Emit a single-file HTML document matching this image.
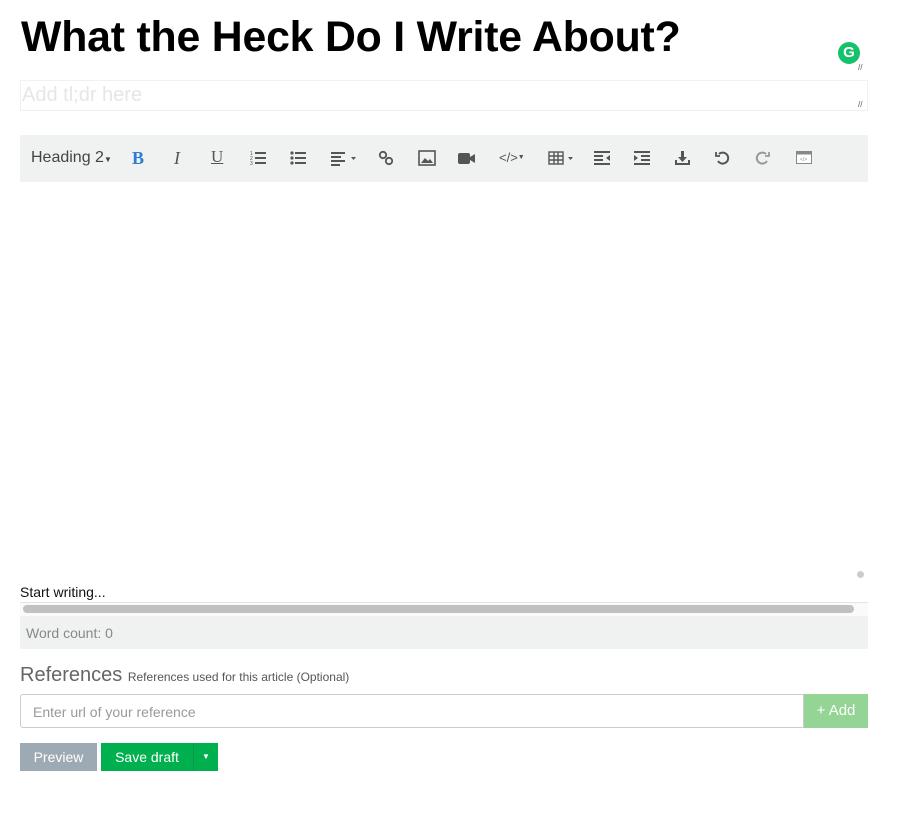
<!DOCTYPE html>
<html><head><meta charset="utf-8"><style>
*{box-sizing:border-box;margin:0;padding:0}
body{width:906px;height:822px;background:#fff;font-family:"Liberation Sans",sans-serif;position:relative;overflow:hidden}
.a{position:absolute}
h1{position:absolute;left:21px;top:13px;font-size:42.8px;font-weight:bold;color:#000;letter-spacing:-0.2px;white-space:nowrap}
.tb{left:20px;top:135px;width:848px;height:47px;background:#f0f1f1;border-radius:2px}
.ic{position:absolute;top:149px}
svg{display:block}
</style></head><body>
<h1>What the Heck Do I Write About?</h1>
<div class="a" style="left:838px;top:42px;width:22px;height:22px;border-radius:50%;background:#15c26b;color:#fff;font-weight:bold;font-size:15px;text-align:center;line-height:22px">G</div>
<div class="a" style="left:858px;top:63px;font-size:8px;color:#555">//</div>
<div class="a" style="left:20px;top:80px;width:848px;height:31px;border:1px solid #edf2f2;font-size:20px;color:#e6e6e6;padding:3px 0 0 1px">Add tl;dr here</div>
<div class="a" style="left:858px;top:100px;font-size:8px;color:#555">//</div>
<div class="a tb"></div>
<div class="a" style="left:31px;top:149px;font-size:16px;color:#444">Heading 2<span style="font-size:8px">▼</span></div>
<div class="a" style="left:132px;top:148px;font-size:18px;font-weight:bold;color:#2a7fd4;font-family:'Liberation Serif',serif">B</div>
<div class="a" style="left:174px;top:148px;font-size:18px;font-style:italic;color:#555;font-family:'Liberation Serif',serif">I</div>
<div class="a" style="left:211px;top:147px;font-size:17px;text-decoration:underline;color:#555;font-family:'Liberation Serif',serif">U</div>
<svg class="ic" style="left:250px" width="17" height="18" viewBox="0 0 17 18" fill="#555"><rect x="5" y="3" width="11" height="2"/><rect x="5" y="8" width="11" height="2"/><rect x="5" y="13" width="11" height="2"/><text x="0" y="6" font-size="5">1</text><text x="0" y="11" font-size="5">2</text><text x="0" y="16" font-size="5">3</text></svg>
<svg class="ic" style="left:290px" width="17" height="18" viewBox="0 0 17 18" fill="#555"><circle cx="2" cy="4" r="1.6"/><circle cx="2" cy="9" r="1.6"/><circle cx="2" cy="14" r="1.6"/><rect x="5" y="3" width="11" height="2"/><rect x="5" y="8" width="11" height="2"/><rect x="5" y="13" width="11" height="2"/></svg>
<svg class="ic" style="left:331px" width="28" height="18" viewBox="0 0 28 18" fill="#555"><rect x="0" y="3" width="14" height="2"/><rect x="0" y="7" width="10" height="2"/><rect x="0" y="11" width="14" height="2"/><rect x="0" y="15" width="9" height="2"/><path d="M20 8h5l-2.5 3z"/></svg>
<svg class="ic" style="left:378px" width="16" height="18" viewBox="0 0 16 18" fill="none" stroke="#555" stroke-width="1.8"><circle cx="5" cy="6" r="3.2"/><circle cx="11" cy="12" r="3.2"/></svg>
<svg class="ic" style="left:418px" width="18" height="18" viewBox="0 0 18 18"><rect x="1" y="2" width="16" height="14" fill="none" stroke="#555" stroke-width="1.6"/><path d="M3 14l4-5 3 3 2-2 3 4z" fill="#555"/></svg>
<svg class="ic" style="left:457px" width="19" height="18" viewBox="0 0 19 18" fill="#555"><rect x="1" y="4" width="12" height="11" rx="2"/><path d="M13 8l5-3v9l-5-3z"/></svg>
<div class="a" style="left:499px;top:150px;font-size:13px;color:#555">&lt;/&gt;<span style="font-size:7px;vertical-align:3px">▼</span></div>
<svg class="ic" style="left:548px" width="28" height="18" viewBox="0 0 28 18" fill="none" stroke="#555" stroke-width="1.4"><rect x="1" y="3" width="14" height="12"/><path d="M1 7h14M1 11h14M6 3v12M10 3v12"/><path d="M20 8h5l-2.5 3z" fill="#555" stroke="none"/></svg>
<svg class="ic" style="left:594px" width="17" height="18" viewBox="0 0 17 18" fill="#555"><rect x="0" y="2" width="16" height="2"/><rect x="0" y="6" width="9" height="2"/><rect x="0" y="10" width="9" height="2"/><rect x="0" y="14" width="16" height="2"/><path d="M16 6v6l-4-3z"/></svg>
<svg class="ic" style="left:634px" width="17" height="18" viewBox="0 0 17 18" fill="#555"><rect x="0" y="2" width="16" height="2"/><rect x="7" y="6" width="9" height="2"/><rect x="7" y="10" width="9" height="2"/><rect x="0" y="14" width="16" height="2"/><path d="M0 6v6l4-3z"/></svg>
<svg class="ic" style="left:674px" width="17" height="18" viewBox="0 0 17 18" fill="#555"><path d="M7 2h3v6h3l-4.5 5L4 8h3z"/><path d="M1 11h2v3h11v-3h2v5H1z"/></svg>
<svg class="ic" style="left:714px" width="17" height="18" viewBox="0 0 17 18" fill="none" stroke="#555" stroke-width="2"><path d="M5 5a5.5 5.5 0 1 1 -1 7"/><path d="M2 3v4h4" stroke-width="1.8"/></svg>
<svg class="ic" style="left:754px" width="17" height="18" viewBox="0 0 17 18" fill="none" stroke="#999" stroke-width="2"><path d="M12 5a5.5 5.5 0 1 0 1 7"/><path d="M15 3v4h-4" stroke-width="1.8"/></svg>
<svg class="ic" style="left:796px" width="17" height="18" viewBox="0 0 17 18"><rect x="0.5" y="2.5" width="15" height="12" fill="#fff" stroke="#888"/><rect x="0.5" y="2.5" width="15" height="3" fill="#888"/><text x="4" y="12" font-size="5" fill="#888">&lt;/&gt;</text></svg>
<div class="a" style="left:857px;top:571px;width:7px;height:7px;border-radius:50%;background:#ccc"></div>
<div class="a" style="left:20px;top:584px;font-size:14px;color:#111">Start writing...</div>
<div class="a" style="left:20px;top:602px;width:848px;height:14px;border-top:1px solid #e4e4e4;background:#fafafa"></div>
<div class="a" style="left:23px;top:605px;width:831px;height:8px;border-radius:4px;background:#c1c1c1"></div>
<div class="a" style="left:20px;top:616px;width:848px;height:33px;background:#f0f1f1;border-radius:0 0 2px 2px;font-size:14px;color:#888;padding:9px 0 0 6px">Word count: 0</div>
<div class="a" style="left:20px;top:664px;font-size:20px;color:#666;white-space:nowrap">References <span style="font-size:12px;color:#555">References used for this article (Optional)</span></div>
<div class="a" style="left:20px;top:694px;width:784px;height:34px;border:1px solid #ccc;border-radius:3px 0 0 3px;font-size:14px;color:#999;padding:9px 0 0 12px">Enter url of your reference</div>
<div class="a" style="left:804px;top:694px;width:64px;height:34px;background:#94d494;color:#fff;font-size:15px;text-align:center;line-height:34px">+ Add</div>
<div class="a" style="left:20px;top:743px;width:77px;height:28px;background:#9eaab3;color:#fff;font-size:14px;text-align:center;line-height:28px">Preview</div>
<div class="a" style="left:101px;top:743px;width:92px;height:28px;background:#00b04e;color:#fff;font-size:14px;text-align:center;line-height:28px">Save draft</div>
<div class="a" style="left:193px;top:743px;width:25px;height:28px;background:#00b04e;border-left:1px solid #059a45;color:#fff;font-size:8px;text-align:center;line-height:28px">▼</div>
</body></html>
